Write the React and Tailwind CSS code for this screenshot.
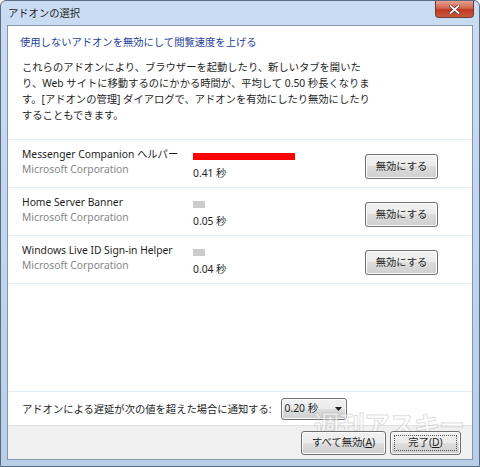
const FONT = { fontFamily: '"Noto Sans", "Noto Sans CJK JP", sans-serif' };

const addons = [
  { name: "Messenger Companion ヘルパー", time: "0.41 秒", bar: "w-[102px] bg-[#ff0000]" },
  { name: "Home Server Banner", time: "0.05 秒", bar: "w-[12px] bg-[#cccccc]" },
  { name: "Windows Live ID Sign-in Helper", time: "0.04 秒", bar: "w-[12px] bg-[#cccccc]" },
];

function WinButton({ children, className = "", focused = false }) {
  return (
    <button
      className={`relative flex items-center justify-center rounded-[3px] border border-[#707070] bg-[linear-gradient(#f2f2f2_0%,#ebebeb_49%,#dddddd_50%,#cfcfcf_100%)] text-[10.3px] leading-none text-[#1e1e1e] shadow-[inset_0_0_0_1px_#fcfcfc] ${className}`}
    >
      {focused && (
        <span className="absolute inset-[3px] border border-dotted border-[#555]" />
      )}
      <span className="relative">{children}</span>
    </button>
  );
}

function AddonRow({ addon }) {
  return (
    <div className="flex h-[48px] border-b border-[#e3ebf5] pl-[14px] pr-[34px]">
      <div className="flex w-[171px] flex-col pt-[6px]">
        <span className="text-[10.3px] leading-[16px] text-[#1e1e1e] whitespace-nowrap">{addon.name}</span>
        <span className="text-[10.3px] leading-[15px] text-[#868686]">Microsoft Corporation</span>
      </div>
      <div className="flex flex-1 flex-col pt-[13px]">
        <div className={`h-[7px] ${addon.bar}`} />
        <span className="mt-[5px] text-[10.3px] leading-[16px] text-[#1e1e1e]">{addon.time}</span>
      </div>
      <div className="pt-[14px]">
        <WinButton className="h-[25px] w-[73px]">無効にする</WinButton>
      </div>
    </div>
  );
}

export default function App() {
  return (
    <div
      style={FONT}
      className="relative flex h-[467px] w-[480px] flex-col overflow-hidden rounded-t-[6px] border border-[#5a6a80] bg-[linear-gradient(#c9dcf2,#b8cfea)]"
    >
      {/* title bar */}
      <div className="flex h-[24px] shrink-0 items-start justify-between">
        <span className="pl-[7px] pt-[4px] text-[10.3px] leading-[16px] text-[#1e1e1e]">アドオンの選択</span>
        <div className="mr-[5px] flex h-[17px] w-[39px] items-center justify-center rounded-b-[4px] border border-t-0 border-[#6d3b3b] bg-[linear-gradient(#e5a08f,#d3634e_45%,#c0381f_55%,#c85a3c)]">
          <svg width="11" height="9" viewBox="0 0 11 9">
            <path d="M1.5 1 L9.5 8 M9.5 1 L1.5 8" stroke="#5a2a20" strokeWidth="3.2" strokeLinecap="square" />
            <path d="M1.5 1 L9.5 8 M9.5 1 L1.5 8" stroke="#ffffff" strokeWidth="1.8" strokeLinecap="square" />
          </svg>
        </div>
      </div>

      {/* client area */}
      <div className="mx-[6px] mb-[6px] flex flex-1 flex-col border border-[#8796a8] bg-white">
        <div className="border-b border-[#e3ebf5] pb-[16px]">
          <div className="pl-[12px] pt-[8px] text-[10.3px] leading-[16px] text-[#1f3f9c]">
            使用しないアドオンを無効にして閲覧速度を上げる
          </div>
          <p className="mt-[9px] pl-[14px] text-[10.3px] leading-[16px] text-[#1e1e1e]">
            これらのアドオンにより、ブラウザーを起動したり、新しいタブを開いた
            <br />
            り、Web サイトに移動するのにかかる時間が、平均して 0.50 秒長くなりま
            <br />
            す。[アドオンの管理] ダイアログで、アドオンを有効にしたり無効にしたり
            <br />
            することもできます。
          </p>
        </div>

        {addons.map((a) => (
          <AddonRow key={a.name} addon={a} />
        ))}

        <div className="flex-1 border-b border-[#e3ebf5]" />

        <div className="flex h-[33px] items-center pl-[14px]">
          <span className="text-[10.3px] leading-[16px] text-[#1e1e1e]">
            アドオンによる遅延が次の値を超えた場合に通知する:
          </span>
          <div className="ml-[9px] flex h-[22px] w-[66px] items-center justify-between rounded-[3px] border border-[#707070] bg-[linear-gradient(#f2f2f2_0%,#ebebeb_49%,#dddddd_50%,#cfcfcf_100%)] pl-[3px] pr-[4px] shadow-[inset_0_0_0_1px_#fcfcfc]">
            <span className="text-[10.3px] leading-none text-[#1e1e1e]">0.20 秒</span>
            <svg width="7" height="4" viewBox="0 0 7 4">
              <path d="M0 0 H7 L3.5 4 Z" fill="#1e1e1e" />
            </svg>
          </div>
        </div>

        <div className="relative flex h-[34px] items-center justify-end gap-[4px] border-t border-[#dfdfdf] bg-[#f0f0f0] pr-[11px]">
          <span className="pointer-events-none absolute right-[8px] top-[-14px] text-[26px] font-bold leading-none tracking-[-1px] text-white/50 [-webkit-text-stroke:1px_rgba(160,160,160,0.35)]">
            週刊アスキー
          </span>
          <WinButton className="h-[24px] w-[85px]">
            すべて無効(<span className="underline">A</span>)
          </WinButton>
          <WinButton className="h-[24px] w-[71px]" focused>
            完了(<span className="underline">D</span>)
          </WinButton>
        </div>
      </div>
    </div>
  );
}
